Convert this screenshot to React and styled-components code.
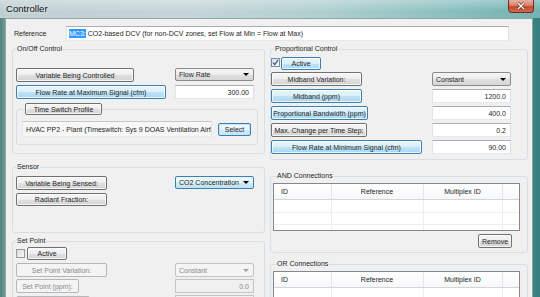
import React from 'react';
import styled, { createGlobalStyle, css } from 'styled-components';

const Global = createGlobalStyle`
  html, body { margin: 0; padding: 0; background: #fff; }
  #root { width: 540px; height: 297px; }
`;

const Window = styled.div`
  width: 540px;
  height: 297px;
  overflow: hidden;
  display: flex;
  flex-direction: column;
  background: linear-gradient(90deg, #557f7a 0%, #6f9f98 1%, #7fb0ab 40%, #4f9f9c 90%, #357f7e 100%);
  font-family: "Liberation Sans", Arial, sans-serif;
  font-size: 7px;
  color: #1e1e1e;
`;

const TitleBar = styled.div`
  flex: 0 0 18px;
  height: 18px;
  display: flex;
  align-items: flex-start;
  padding: 0 6px 0 6px;
  box-sizing: border-box;
  background:
    linear-gradient(180deg, rgba(255,255,255,0.3) 0%, rgba(255,255,255,0) 60%),
    linear-gradient(90deg, #bfcfd2 0%, #c6d6d8 35%, #b0cfcf 60%, #88bfbe 85%, #72b2b0 100%);
`;

const Title = styled.div`
  font-size: 9.6px;
  line-height: 17px;
  color: #101010;
  text-shadow: 0 0 4px rgba(255,255,255,0.9);
`;

const Close = styled.div`
  margin-left: auto;
  width: 26px;
  height: 13px;
  box-sizing: border-box;
  border: 1px solid #7a2a1c;
  border-top: none;
  border-radius: 0 0 4px 4px;
  background: linear-gradient(180deg, #e8b0a2 0%, #d8826c 45%, #c24a30 55%, #d06a4e 100%);
  display: flex;
  align-items: center;
  justify-content: center;
`;

const Frame = styled.div`
  flex: 1;
  display: flex;
  padding: 0 7px 0 5px;
  min-height: 0;
`;

const Client = styled.div`
  flex: 1;
  background: #f0f0f0;
  border: 1px solid #8ea6a6;
  border-bottom: none;
  padding: 7px 4px 0 6px;
  min-height: 0;
  overflow: hidden;
`;

const RefRow = styled.div`
  display: flex;
  align-items: center;
  height: 15px;
`;

const RefLabel = styled.div`
  width: 54px;
  padding-left: 2px;
  box-sizing: border-box;
`;

const RefField = styled.div`
  box-sizing: border-box;
  width: 443px;
  height: 15px;
  border: 1px solid #abadb3;
  border-color: #abadb3 #dbdfe6 #e3e9ef #e2e3ea;
  background: #fff;
  display: flex;
  align-items: center;
  padding-left: 2px;
  white-space: nowrap;
  overflow: hidden;
`;

const Selected = styled.span`
  background: #3399ff;
  color: #fff;
  padding: 1px 0;
  margin-right: 2px;
`;

const Columns = styled.div`
  display: grid;
  grid-template-columns: 253px 258px;
  column-gap: 5px;
  margin-top: 3px;
  align-items: start;
`;

const Column = styled.div`
  display: flex;
  flex-direction: column;
`;

const Group = styled.fieldset`
  margin: ${p => p.$mt || 0}px 0 0 0;
  padding: ${p => p.$pad};
  border: 1px solid #d5dfe5;
  border-radius: 3px;
  height: ${p => p.$h}px;
  box-sizing: border-box;
  min-width: 0;
`;

const Legend = styled.legend`
  padding: 0 1px;
  margin-left: ${p => p.$ml || 0}px;
  line-height: 10px;
  font-size: 7px;
`;

const FormGrid = styled.div`
  display: grid;
  grid-template-columns: 1fr 79px;
  grid-auto-rows: ${p => p.$rh || 14}px;
  row-gap: ${p => p.$gap || 3}px;
  align-items: start;
  margin-right: ${p => p.$mr || 0}px;
`;

const Btn = styled.div`
  box-sizing: border-box;
  width: ${p => p.$w}px;
  height: ${p => p.$h || 14}px;
  margin-top: ${p => p.$mt || 0}px;
  border: 1px solid #707070;
  border-radius: 2px;
  background: linear-gradient(180deg, #f6f6f6 0%, #eeeeee 50%, #e0e0e0 51%, #d4d4d4 100%);
  box-shadow: inset 0 0 0 1px rgba(255, 255, 255, 0.75);
  display: flex;
  align-items: center;
  justify-content: center;
  white-space: nowrap;
  overflow: hidden;
  color: #1e1e1e;
  ${p => p.$blue && css`
    border-color: #3c7fb1;
    background: linear-gradient(180deg, #e8f5fc 0%, #d9f0fb 50%, #c0e3f6 51%, #abd6ef 100%);
  `}
  ${p => p.$default && css`
    border-color: #3c7fb1;
    background: linear-gradient(180deg, #f2f9fd 0%, #e6f4fb 50%, #d4ecf8 51%, #c6e4f4 100%);
    box-shadow: inset 0 0 0 1px #bfe6fb;
  `}
  ${p => p.$disabled && css`
    border-color: #b5b8bb;
    background: #f4f4f4;
    box-shadow: none;
    color: #8a8a8a;
  `}
`;

const Field = styled.div`
  box-sizing: border-box;
  width: ${p => p.$w || 79}px;
  height: ${p => p.$h || 14}px;
  border: 1px solid #abadb3;
  border-color: #abadb3 #dbdfe6 #e3e9ef #e2e3ea;
  background: #fff;
  display: flex;
  align-items: center;
  justify-content: ${p => (p.$left ? 'flex-start' : 'flex-end')};
  padding: 0 4px 0 3px;
  white-space: nowrap;
  overflow: hidden;
  ${p => p.$readonly && css`
    background: #f7f7f7;
    border-color: #c4c7cc #dfe2e6 #e8eaed #e2e4e8;
  `}
  ${p => p.$disabled && css`
    background: #f0f0f0;
    border-color: #c2c4c8;
    color: #8a8a8a;
  `}
`;

const Combo = styled.div`
  box-sizing: border-box;
  width: 79px;
  height: ${p => p.$h || 14}px;
  border: 1px solid #8a8a8a;
  border-radius: 2px;
  background: linear-gradient(180deg, #f5f5f5 0%, #ececec 50%, #e0e0e0 51%, #d6d6d6 100%);
  display: flex;
  align-items: center;
  justify-content: space-between;
  padding: 0 4px 0 3px;
  white-space: nowrap;
  ${p => p.$focus && css`
    border-color: #3c7fb1;
    background: linear-gradient(180deg, #eef8fd 0%, #e0f2fb 50%, #cdebf9 51%, #c0e3f5 100%);
  `}
  ${p => p.$disabled && css`
    border-color: #c2c4c8;
    background: #f4f4f4;
    color: #8a8a8a;
  `}
`;

const Arrow = styled.span`
  width: 0;
  height: 0;
  border-left: 3px solid transparent;
  border-right: 3px solid transparent;
  border-top: 3px solid ${p => (p.$disabled ? '#a0a0a0' : '#000')};
`;

const CheckRow = styled.div`
  display: flex;
  align-items: center;
  gap: ${p => p.$gap || 1}px;
`;

const Check = styled.div`
  box-sizing: border-box;
  width: 9px;
  height: 9px;
  border: 1px solid ${p => (p.$checked ? '#6f8fb3' : '#9a9a9a')};
  background: linear-gradient(135deg, #dcdcdc 0%, #f8f8f8 100%);
  display: flex;
  align-items: center;
  justify-content: center;
`;

const TimeBox = styled.fieldset`
  margin: 4px 0 0 0;
  padding: 6px 0 0 5px;
  border: 1px solid #d5dfe5;
  border-radius: 3px;
  height: 42px;
  box-sizing: border-box;
  min-width: 0;
`;

const TimeLegend = styled.legend`
  padding: 0;
  margin-left: 3px;
`;

const TimeRow = styled.div`
  display: flex;
  align-items: center;
  gap: 6px;
`;

const TableBox = styled.div`
  width: 247px;
  height: ${p => p.$h}px;
  box-sizing: border-box;
  border: 1px solid #828790;
  background: #fff;
  overflow: hidden;
`;

const Table = styled.table`
  border-collapse: collapse;
  table-layout: fixed;
  width: 245px;
`;

const Th = styled.th`
  font-weight: normal;
  height: 15px;
  padding: 0 0 0 ${p => (p.$left ? 7 : 0)}px;
  text-align: ${p => (p.$left ? 'left' : 'center')};
  border-right: 1px solid #e3e5e8;
  border-bottom: 1px solid #d5d5d5;
  background: linear-gradient(180deg, #ffffff 0%, #f6f7f9 100%);
  white-space: nowrap;
  box-sizing: border-box;
`;

const Td = styled.td`
  height: ${p => p.$h || 11}px;
  padding: 0;
  border-right: 1px solid #eeeeee;
  border-bottom: 1px solid #eeeeee;
`;

const RemoveRow = styled.div`
  display: flex;
  justify-content: flex-end;
  margin-top: 3px;
  padding-right: 9px;
`;

const ConnTable = ({ h, rows }) => (
  <TableBox $h={h}>
    <Table>
      <colgroup>
        <col style={{ width: 57 }} />
        <col style={{ width: 92 }} />
        <col style={{ width: 79 }} />
        <col style={{ width: 17 }} />
      </colgroup>
      <thead>
        <tr>
          <Th $left>ID</Th>
          <Th>Reference</Th>
          <Th>Multiplex ID</Th>
          <Th />
        </tr>
      </thead>
      <tbody>
        {rows.map((rh, i) => (
          <tr key={i}>
            <Td $h={rh} />
            <Td $h={rh} />
            <Td $h={rh} />
            <Td $h={rh} />
          </tr>
        ))}
      </tbody>
    </Table>
  </TableBox>
);

const CheckMark = () => (
  <svg width="7" height="7" viewBox="0 0 7 7">
    <path d="M1 3.6 L2.8 5.6 L6 1" fill="none" stroke="#2b4f8a" strokeWidth="1.2" />
  </svg>
);

export default function App() {
  return (
    <>
      <Global />
      <Window>
        <TitleBar>
          <Title>Controller</Title>
          <Close>
            <svg width="10" height="8" viewBox="0 0 10 8">
              <path d="M2 1 L8 7 M8 1 L2 7" stroke="#5a1a10" strokeWidth="2.6" />
              <path d="M2 1 L8 7 M8 1 L2 7" stroke="#ffffff" strokeWidth="1.5" />
            </svg>
          </Close>
        </TitleBar>
        <Frame>
          <Client>
            <RefRow>
              <RefLabel>Reference</RefLabel>
              <RefField>
                <Selected>MC3:</Selected>
                CO2-based DCV (for non-DCV zones, set Flow at Min = Flow at Max)
              </RefField>
            </RefRow>
            <Columns>
              <Column>
                <Group $h={110} $pad="14px 6px 0 3px">
                  <Legend>On/Off Control</Legend>
                  <FormGrid $mr={4}>
                    <Btn $w={118}>Variable Being Controlled</Btn>
                    <Combo $h={13}>Flow Rate<Arrow /></Combo>
                    <Btn $w={150} $blue>Flow Rate at Maximum Signal (cfm)</Btn>
                    <Field>300.00</Field>
                  </FormGrid>
                  <TimeBox>
                    <TimeLegend>
                      <Btn $w={77} $h={12}>Time Switch Profile</Btn>
                    </TimeLegend>
                    <TimeRow>
                      <Field $w={190} $h={16} $left $readonly>
                        HVAC PP2 - Plant (Timeswitch: Sys 9 DOAS Ventilation Airfk
                      </Field>
                      <Btn $w={33} $h={13} $default>Select</Btn>
                    </TimeRow>
                  </TimeBox>
                </Group>

                <Group $h={71} $mt={8} $pad="4px 6px 0 3px">
                  <Legend>Sensor</Legend>
                  <FormGrid $mr={4}>
                    <Btn $w={91}>Variable Being Sensed:</Btn>
                    <Combo $h={13} $focus>CO2 Concentration<Arrow /></Combo>
                    <Btn $w={91} $h={13}>Radiant Fraction:</Btn>
                  </FormGrid>
                </Group>

                <Group $h={90} $mt={3} $pad="1px 6px 0 3px">
                  <Legend>Set Point</Legend>
                  <FormGrid $mr={4} $gap={2}>
                    <CheckRow $gap={2}>
                      <Check />
                      <Btn $w={40} $h={13}>Active</Btn>
                    </CheckRow>
                    <div />
                    <Btn $w={91} $disabled>Set Point Variation:</Btn>
                    <Combo $disabled>Constant<Arrow $disabled /></Combo>
                    <Btn $w={63} $disabled>Set Point (ppm):</Btn>
                    <Field $disabled>0.0</Field>
                    <Btn $w={74} $mt={1} $disabled />
                    <Field $disabled />
                  </FormGrid>
                </Group>
              </Column>

              <Column>
                <Group $h={116} $pad="1px 16px 0 0">
                  <Legend $ml={3}>Proportional Control</Legend>
                  <FormGrid>
                    <CheckRow>
                      <Check $checked>
                        <CheckMark />
                      </Check>
                      <Btn $w={40} $h={13} $mt={2} $blue>Active</Btn>
                    </CheckRow>
                    <div />
                    <Btn $w={91}>Midband Variation:</Btn>
                    <Combo>Constant<Arrow /></Combo>
                    <Btn $w={91} $blue>Midband (ppm)</Btn>
                    <Field>1200.0</Field>
                    <Btn $w={97} $blue>Proportional Bandwidth (ppm)</Btn>
                    <Field>400.0</Field>
                    <Btn $w={96}>Max. Change per Time Step:</Btn>
                    <Field>0.2</Field>
                    <Btn $w={151} $blue>Flow Rate at Minimum Signal (cfm)</Btn>
                    <Field>90.00</Field>
                  </FormGrid>
                </Group>

                <Group $h={82} $mt={11} $pad="2px 6px 0 2px">
                  <Legend $ml={3}>AND Connections</Legend>
                  <ConnTable h={48} rows={[12, 11, 11]} />
                  <RemoveRow>
                    <Btn $w={34}>Remove</Btn>
                  </RemoveRow>
                </Group>

                <Group $h={80} $mt={6} $pad="2px 6px 0 2px">
                  <Legend $ml={3}>OR Connections</Legend>
                  <ConnTable h={60} rows={[12, 11, 11]} />
                </Group>
              </Column>
            </Columns>
          </Client>
        </Frame>
      </Window>
    </>
  );
}
